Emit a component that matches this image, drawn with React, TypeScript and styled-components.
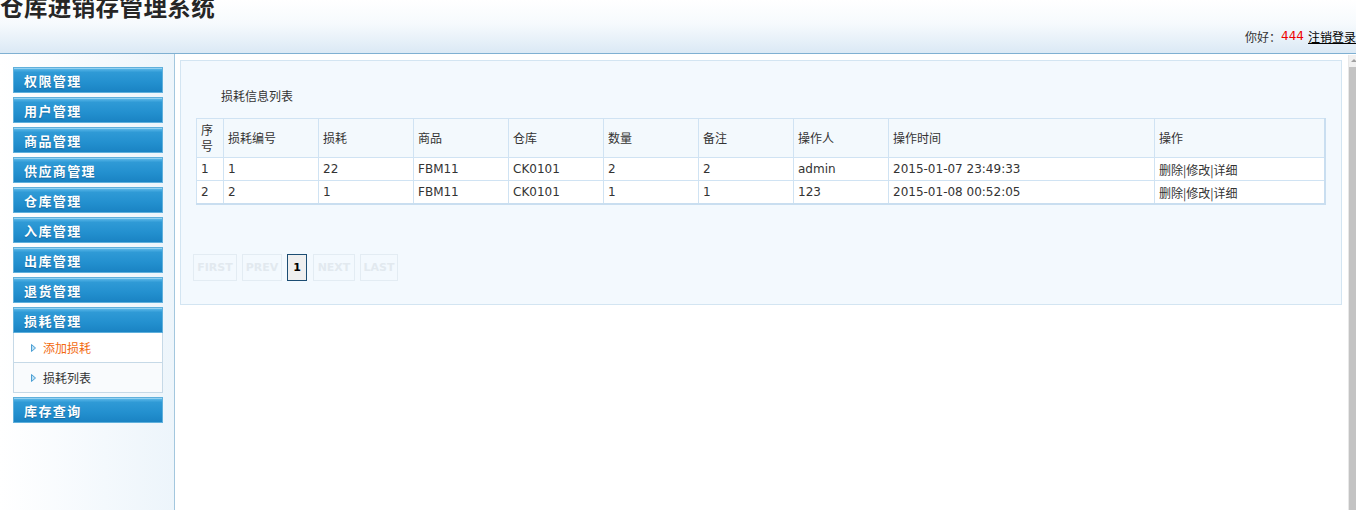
import styled, { createGlobalStyle } from 'styled-components';

/* ── Global ── */
const Global = createGlobalStyle`
  html, body { margin: 0; padding: 0; overflow: hidden; background: #fff; }
  body { font-family: "DejaVu Sans", "Noto Sans CJK SC", sans-serif; font-size: 12px; color: #333; }
`;

const CJK = `"Noto Sans CJK SC", "DejaVu Sans", sans-serif`;

/* ── Header ── */
const Header = styled.header`
  height: 53px;
  background: linear-gradient(to bottom, #ffffff 0%, #f6fafd 45%, #dbe9f5 100%);
  border-bottom: 1px solid #7fb0d2;
  display: flex;
  flex-direction: column;
  justify-content: space-between;
  overflow: hidden;
`;

const Title = styled.h1`
  margin: -9px 0 0 0;
  font-family: ${CJK};
  font-size: 23.5px;
  font-weight: 700;
  line-height: 30px;
  color: #262626;
  letter-spacing: 0.4px;
`;

const UserBar = styled.div`
  display: flex;
  justify-content: flex-end;
  align-items: center;
  height: 18px;
  margin: 0 0 8px 0;
  font-family: ${CJK};
  font-size: 12px;
  color: #333;
  white-space: nowrap;

  b { color: #e00; font-weight: 400; font-family: "DejaVu Sans", sans-serif; margin: 0 4px 0 0; }
  a { color: #000; text-decoration: underline; }
`;

/* ── Layout ── */
const Body = styled.div`
  display: flex;
  height: 456px;
`;

const Sidebar = styled.aside`
  width: 175px;
  flex-shrink: 0;
  border-right: 1px solid #a3c7de;
  background: linear-gradient(to right, #ffffff 0%, #f4f9fd 60%, #edf5fb 100%);
  padding: 13px 0 0 13px;
  box-sizing: border-box;
  display: flex;
  flex-direction: column;
`;

const MenuBtn = styled.div`
  width: 150px;
  height: 26px;
  box-sizing: border-box;
  margin-bottom: 4px;
  border: 1px solid #5fb0dc;
  background: linear-gradient(to bottom, #62bdec 0%, #2f9ad6 18%, #2390cf 60%, #1a83c3 100%);
  box-shadow: inset 0 1px 0 rgba(255,255,255,0.35);
  display: flex;
  align-items: center;
  padding-left: 10px;
  font-family: ${CJK};
  font-size: 13px;
  font-weight: 700;
  letter-spacing: 1.4px;
  color: #fff;
  text-shadow: 0 1px 1px rgba(0,40,80,0.35);
`;

const SubMenu = styled.div`
  width: 150px;
  margin: -4px 0 4px 0;
  display: flex;
  flex-direction: column;
`;

const SubItem = styled.div<{ $active?: boolean }>`
  height: 30px;
  box-sizing: border-box;
  border: 1px solid #c6d9e7;
  border-top: none;
  background: ${p => (p.$active ? '#ffffff' : '#f9fbfd')};
  display: flex;
  align-items: center;
  padding-left: 17px;
  gap: 7px;
  font-family: ${CJK};
  font-size: 12px;
  color: ${p => (p.$active ? '#f26a10' : '#333')};
`;

const Arrow = () => (
  <svg width="5" height="8" viewBox="0 0 5 8">
    <path d="M0.5 0.5 L4.5 4 L0.5 7.5 Z" fill="#bfe0f4" stroke="#4a9fd4" strokeWidth="1" />
  </svg>
);

const Main = styled.main`
  flex: 1;
  display: flex;
  padding: 6px 0 0 5px;
  min-width: 0;
`;

const Panel = styled.section`
  flex: 1;
  height: 245px;
  box-sizing: border-box;
  border: 1px solid #d3e5f2;
  background: #f3f9fe;
  margin-right: 6px;
  padding: 26px 15px 0 15px;
`;

const Scroll = styled.div`
  width: 7px;
  margin-top: -5px;
  background: #c3c3c3;
  border-left: 1px solid #e8e8e8;
  position: relative;

  &::before {
    content: '';
    position: absolute;
    top: 0; left: 0; right: 0;
    height: 12px;
    background: #f0f0f0;
  }
  &::after {
    content: '';
    position: absolute;
    top: 4px; left: 2px;
    border-left: 3px solid transparent;
    border-right: 3px solid transparent;
    border-bottom: 3px solid #a0a0a0;
  }
`;

const PanelTitle = styled.div`
  font-family: ${CJK};
  font-size: 12px;
  line-height: 18px;
  color: #333;
  padding-left: 25px;
  margin-bottom: 13px;
`;

/* ── Table ── */
const Table = styled.table`
  width: 100%;
  border-collapse: collapse;
  border-right: 2px solid #c9def0;
  border-bottom: 2px solid #c9def0;
  font-size: 12px;
  color: #333;
`;

const Th = styled.th<{ $w?: number }>`
  width: ${p => (p.$w ? `${p.$w}px` : 'auto')};
  height: 38px;
  text-align: left;
  font-weight: 400;
  font-family: ${CJK};
  background: #f3f9fd;
  border: 1px solid #d0e3f3;
  padding: 0 3px 0 4px;
  line-height: 16px;
`;

const Td = styled.td`
  height: 22px;
  background: #fff;
  border: 1px solid #d0e3f3;
  padding: 0 3px 0 4px;
  white-space: nowrap;
`;

const Ops = styled.span`
  font-family: ${CJK};
  color: #333;
`;

/* ── Pager ── */
const Pager = styled.div`
  display: flex;
  gap: 5px;
  margin: 49px 0 0 -3px;
`;

const PageBtn = styled.span<{ $cur?: boolean; $w: number }>`
  width: ${p => p.$w}px;
  height: 27px;
  box-sizing: border-box;
  display: flex;
  align-items: center;
  justify-content: center;
  font-family: "DejaVu Sans", sans-serif;
  font-size: 11px;
  font-weight: 700;
  border: 1px solid ${p => (p.$cur ? '#1c4d73' : '#e3ecf3')};
  background: ${p => (p.$cur ? '#efefef' : 'transparent')};
  color: ${p => (p.$cur ? '#000' : '#e2e9ef')};
  margin-right: ${p => (p.$cur ? '1px' : '0')};
`;

const menus = ['权限管理', '用户管理', '商品管理', '供应商管理', '仓库管理', '入库管理', '出库管理', '退货管理'];

const rows = [
  ['1', '1', '22', 'FBM11', 'CK0101', '2', '2', 'admin', '2015-01-07 23:49:33'],
  ['2', '2', '1', 'FBM11', 'CK0101', '1', '1', '123', '2015-01-08 00:52:05'],
];

const heads: [string, number?][] = [
  ['序号', 19], ['损耗编号', 87], ['损耗', 87], ['商品', 87], ['仓库', 87],
  ['数量', 87], ['备注', 87], ['操作人', 87], ['操作时间', 258], ['操作'],
];

export default function App() {
  return (
    <>
      <Global />
      <Header>
        <Title>仓库进销存管理系统</Title>
        <UserBar>你好：<b>444</b><a>注销登录</a></UserBar>
      </Header>
      <Body>
        <Sidebar>
          {menus.map(m => <MenuBtn key={m}>{m}</MenuBtn>)}
          <MenuBtn>损耗管理</MenuBtn>
          <SubMenu>
            <SubItem $active><Arrow />添加损耗</SubItem>
            <SubItem><Arrow />损耗列表</SubItem>
          </SubMenu>
          <MenuBtn>库存查询</MenuBtn>
        </Sidebar>
        <Main>
          <Panel>
            <PanelTitle>损耗信息列表</PanelTitle>
            <Table>
              <thead>
                <tr>
                  {heads.map(([h, w]) => (
                    <Th key={h} $w={w}>{h === '序号' ? <>序<br />号</> : h}</Th>
                  ))}
                </tr>
              </thead>
              <tbody>
                {rows.map(r => (
                  <tr key={r[0]}>
                    {r.map((c, i) => <Td key={i}>{c}</Td>)}
                    <Td><Ops>删除|修改|详细</Ops></Td>
                  </tr>
                ))}
              </tbody>
            </Table>
            <Pager>
              <PageBtn $w={44}>FIRST</PageBtn>
              <PageBtn $w={40}>PREV</PageBtn>
              <PageBtn $w={20} $cur>1</PageBtn>
              <PageBtn $w={42}>NEXT</PageBtn>
              <PageBtn $w={38}>LAST</PageBtn>
            </Pager>
          </Panel>
          <Scroll />
        </Main>
      </Body>
    </>
  );
}
